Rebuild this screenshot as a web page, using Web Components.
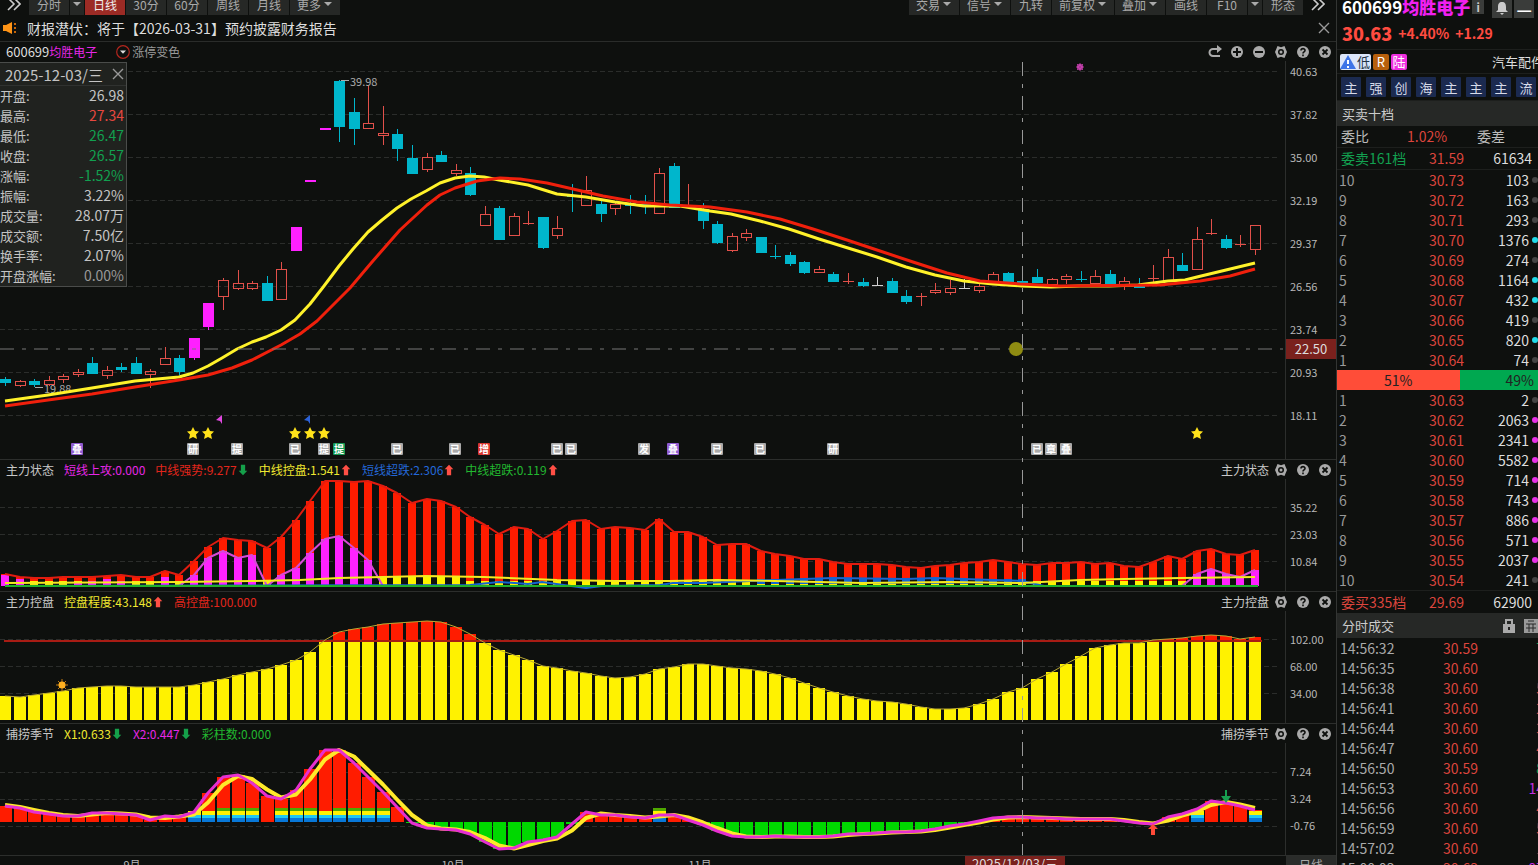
<!DOCTYPE html>
<html lang="zh-CN">
<head>
<meta charset="utf-8">
<title>600699 均胜电子</title>
<style>
  body {
    margin: 0;
    background: #0e100e;
    color: #c8c8c8;
    font-family: "Noto Sans CJK SC", "Noto Sans", sans-serif;
    overflow: hidden;
  }
</style>
</head>
<body>
<stock-terminal></stock-terminal>

<script>
const BASE = `
  * { box-sizing: border-box; }
  p, h2, dl, dt, dd, ol, table, th, td, button { margin: 0; padding: 0; }
  button {
    font: inherit;
    color: inherit;
    background: none;
    border: 0;
    cursor: pointer;
  }
`;

// ---------- icons ----------

const ICONS = {
  redo: '<path d="M10 4H5a3.500 3.500 0 0 0 0 7h7" fill="none" stroke="#aaa" stroke-width="2"/><path d="M9 0l5 4-5 4z" fill="#aaa"/>',
  plus: '<circle cx="7" cy="7" r="6" fill="#aaa"/><path d="M3 7h8M7 3v8" stroke="#0e100e" stroke-width="2"/>',
  minus: '<circle cx="7" cy="7" r="6" fill="#aaa"/><path d="M3 7h8" stroke="#0e100e" stroke-width="2"/>',
  gear: '<path d="M3.500 1L7 2.300 10.500 1l1 2.500L13 7l-1.500 3.500-1 2.500L7 11.700 3.500 13l-1-2.500L1 7l1.500-3.500z" fill="#aaa"/><circle cx="7" cy="7" r="3" fill="#0e100e"/><circle cx="7" cy="7" r="1.500" fill="#aaa"/>',
  help: '<circle cx="7" cy="7" r="6" fill="#aaa"/><path d="M5 5.600c0-2.600 4-2.600 4-.2C9 7 7 6.800 7 8.600M7 9.600v1.600" fill="none" stroke="#0e100e" stroke-width="1.600"/>',
  close: '<circle cx="7" cy="7" r="6" fill="#aaa"/><path d="M4.500 4.500l5 5m0-5l-5 5" stroke="#0e100e" stroke-width="1.800"/>',
  cross: '<path d="M2 2l10 10M12 2L2 12" stroke="#999" stroke-width="1.400"/>',
  more: '<path d="M1 1l6 6-6 6M7 1l6 6-6 6" fill="none" stroke="#ccc" stroke-width="1.600"/>',
  caret: '<path d="M3 5h8L7 9z" fill="#aaa"/>',
  dropdown: '<circle cx="7" cy="7" r="6.300" fill="none" stroke="#b3261e" stroke-width="1.200"/><path d="M4 5.500h6L7 8.700z" fill="#ddd"/>',
  speaker: '<path d="M0 4h3l6-3v12L3 10H0z" fill="#ff9416"/><path d="M11 2h2v2h-2zM11 6h2v2h-2zM11 10h2v2h-2z" fill="#c8660a"/>',
  up: '<path d="M7 1l5 5H9.500v7h-5V6H2z" fill="#ff4f45"/>',
  down: '<path d="M7 13l5-5H9.500V1h-5v7H2z" fill="#15a04a"/>',
  bell: '<path d="M7 0c3 0 4 2 4 5v3l2 2H1l2-2V5c0-3 1-5 4-5zM5 11h4l-2 2z" fill="#ccc"/>',
  lock: '<path d="M1 5h12v9H1z" fill="#aaa"/><path d="M4 6V1h6v5" fill="none" stroke="#aaa" stroke-width="2"/><path d="M7 8v3" stroke="#222" stroke-width="2"/>',
  sheet: '<path d="M0 0h14v14H0z" fill="#999"/><path d="M2 5h10M2 9h10M4 2h6M5 5v8M9 5v8" stroke="#2a2b2a" stroke-width="1"/>',
};

class UiIcon extends HTMLElement {
  connectedCallback() {
    const root = this.shadowRoot || this.attachShadow({ mode: 'open' });
    root.innerHTML = `
      <style>
        :host { display: inline-block; width: 14px; height: 14px; flex: none; }
        svg { display: block; width: 100%; height: 100%; }
      </style>
      <svg viewBox="0 0 14 14" aria-hidden="true">${ICONS[this.getAttribute('name')] || ''}</svg>
    `;
  }
}
customElements.define('ui-icon', UiIcon);

// ---------- top bars ----------

class ToolBar extends HTMLElement {
  connectedCallback() {
    const btn = ([label, kind]) => {
      if (kind === 'arrow') return `<button class="arrow" aria-label="${label}"><ui-icon name="caret"></ui-icon></button>`;
      if (kind === 'menu') return `<button class="menu">${label}<ui-icon name="caret"></ui-icon></button>`;
      return `<button class="${kind || ''}">${label}</button>`;
    };
    const left = [['分时'], ['分时选项', 'arrow'], ['日线', 'active'], ['30分'], ['60分'], ['周线'], ['月线'], ['更多', 'menu']];
    const right = [['交易', 'menu'], ['信号', 'menu'], ['九转'], ['前复权', 'menu'], ['叠加', 'menu'], ['画线'], ['F10'], ['F10选项', 'arrow'], ['形态']];
    this.attachShadow({ mode: 'open' }).innerHTML = `
      <style>
        ${BASE}
        :host { display: flex; justify-content: space-between; height: 15px; overflow: hidden; font-size: 12px; color: #aaa; }
        .group { display: flex; gap: 1px; align-items: flex-end; }
        .group + .group { padding-right: 4px; }
        button { display: flex; align-items: center; justify-content: center; height: 22px; min-width: 40px; padding: 0 7px; background: #262826; white-space: nowrap; }
        .menu { padding: 0 5px 0 7px; }
        .arrow { min-width: 14px; padding: 0; }
        .active { background: #9c2b25; color: #eee; }
        .end { min-width: 28px; background: none; }
      </style>
      <div class="group"><button class="end" aria-label="展开"><ui-icon name="more"></ui-icon></button>${left.map(btn).join('')}</div>
      <div class="group">${right.map(btn).join('')}<button class="end" aria-label="更多工具"><ui-icon name="more"></ui-icon></button></div>
    `;
  }
}
customElements.define('tool-bar', ToolBar);

class NoticeBar extends HTMLElement {
  connectedCallback() {
    this.attachShadow({ mode: 'open' }).innerHTML = `
      <style>
        ${BASE}
        :host { display: flex; align-items: center; gap: 10px; height: 27px; padding: 0 5px 0 3px; border-bottom: 1px solid #2a2c2a; font-size: 14px; color: #ddd; }
        p { flex: 1; }
        button { display: flex; }
      </style>
      <ui-icon name="speaker"></ui-icon>
      <p><slot></slot></p>
      <button aria-label="关闭"><ui-icon name="cross"></ui-icon></button>
    `;
  }
}
customElements.define('notice-bar', NoticeBar);

// ---------- panels ----------

class ChartPanel extends HTMLElement {
  connectedCallback() {
    const ticks = this.getAttribute('ticks').split(',');
    const icons = this.getAttribute('icons').split(',');
    this.attachShadow({ mode: 'open' }).innerHTML = `
      <style>
        ${BASE}
        :host { display: block; font-size: 12px; }
        :host([divided]) { border-top: 1px solid #2c2e2c; }
        header { display: flex; align-items: center; justify-content: space-between; height: 19px; line-height: 18px; padding: 0 4px 0 6px; }
        .legend { display: flex; gap: 10px; align-items: center; }
        .tools { display: flex; gap: 8px; align-items: center; }
        .tools button { display: flex; }
        .name { margin-right: -3px; }
        .body { display: flex; }
        .plot { flex: 1; min-width: 0; }
        ol { width: 51px; padding-left: 4px; border-left: 1px solid #2c2e2c; list-style: none; font-size: 11px; padding-top: var(--axis-top); }
        li { height: var(--axis-step); line-height: 20px; color: #b8b8b8; }
      </style>
      <header>
        <div class="legend"><slot name="legend"></slot></div>
        <div class="tools"><span class="name">${this.getAttribute('label') || ''}</span>${icons.map(n => `<button aria-label="${n}"><ui-icon name="${n}"></ui-icon></button>`).join('')}</div>
      </header>
      <div class="body">
        <div class="plot"><slot></slot></div>
        <ol>${ticks.map(t => `<li>${t}</li>`).join('')}</ol>
      </div>
    `;
  }
}
customElements.define('chart-panel', ChartPanel);

class LegendItem extends HTMLElement {
  connectedCallback() {
    const trend = this.getAttribute('trend');
    this.attachShadow({ mode: 'open' }).innerHTML = `
      <style>
        :host { display: flex; align-items: center; white-space: nowrap; }
        ui-icon { width: 12px; height: 12px; }
      </style>
      <slot></slot>${trend ? `<ui-icon name="${trend}"></ui-icon>` : ''}
    `;
  }
}
customElements.define('legend-item', LegendItem);

// ---------- plots ----------

const DESIGN_WIDTH = 1285;
const COUNT = 87;

// Base class: redraws on resize; x is scaled to the width, y stays in chart units
class BasePlot extends HTMLElement {
  connectedCallback() {
    this.attachShadow({ mode: 'open' }).innerHTML = `
      <style>
        :host { display: block; height: ${this.bottom - this.top}px; overflow: hidden; }
        svg { display: block; width: 100%; height: 100%; }
        text { font-family: "Noto Sans CJK SC", sans-serif; }
      </style>
      <svg></svg>
    `;
    this.svg = this.shadowRoot.querySelector('svg');
    new ResizeObserver(() => this.render()).observe(this);
    this.render();
  }

  render() {
    const w = this.clientWidth || DESIGN_WIDTH;
    this.k = w / DESIGN_WIDTH;
    this.svg.setAttribute('viewBox', `0 ${this.top} ${w} ${this.bottom - this.top}`);
    this.svg.innerHTML = this.draw();
  }

  x(px) { return Math.round(px * this.k); }
  slot(i) { return this.x(5 + i * 14.535); }

  grid(from, step, n) {
    let out = '';
    for (let i = 0; i < n; i++) {
      out += `<path d="M0 ${from + i * step + 0.5}H${this.x(1280)}" stroke="#2b2d2b" stroke-dasharray="5 3"/>`;
    }
    return out;
  }

  bar(i, width, y1, y2, color) {
    if (y2 <= y1) return '';
    return `<rect x="${this.slot(i) - Math.floor(width / 2)}" y="${y1}" width="${width}" height="${y2 - y1}" fill="${color}"/>`;
  }

  line(points, color, width) {
    const pts = points.map(([px, y]) => `${this.x(px)},${y}`).join(' ');
    return `<polyline points="${pts}" fill="none" stroke="${color}" stroke-width="${width}" stroke-linejoin="round"/>`;
  }

  series(values, color, width) {
    return this.line(values.map((y, i) => [5 + i * 14.535, y]), color, width);
  }
}

// kind, high, body top, body bottom, low
const CANDLES = `c377,379,382,386 r380,381,385,387 c379,381,384,387 r376,380,384,386 r374,376,379,383 r369,372,374,377
c357,363,373,373 r366,370,375,379 c363,367,369,372 c357,363,373,373 r369,371,374,388 r347,358,364,364 c355,358,371,375
m338,338,357,360 m303,303,326,330 r278,280,296,310 r270,283,288,290 r281,283,288,290 c276,283,300,300 r262,269,299,299
m227,227,250,250 m180,180,181,181 m128,128,129,129 c80,81,126,142 c98,112,128,145 r86,123,128,129 r106,133,135,145
c129,134,148,161 c145,158,173,173 r153,157,169,172 c151,155,161,162 r164,170,173,176 c167,173,194,196 r206,214,225,226
c206,208,239,239 r213,216,235,235 r211,223,223,225 c217,217,247,249 r216,228,235,239 c184,196,196,212 r176,190,205,205
c201,204,213,222 r201,204,208,215 c195,203,205,214 c195,204,205,214 r168,173,213,213 c163,166,207,207 r184,206,206,207
c203,209,220,229 c221,224,242,244 r233,236,250,252 r229,233,237,241 c237,237,252,253 c245,256,256,259 c252,255,263,266
c261,262,272,274 r266,269,272,273 c272,274,281,281 r273,281,281,284 c278,282,285,287 w277,285,285,286 c278,281,292,292
c290,296,301,304 r293,296,296,306 r283,290,292,294 r280,288,292,295 w279,288,288,288 r284,286,290,293 r272,274,282,282
c272,273,281,281 c279,281,282,282 c269,277,282,283 r278,279,284,284 r274,276,279,284 c271,279,279,282 r270,276,283,283
c270,274,283,283 r277,281,284,290 c278,286,287,287 r265,278,278,282 r249,257,280,280 c253,265,270,271 r227,239,269,269
r219,233,233,235 c235,239,247,249 r235,244,244,247 r225,225,249,255`.split(/\s+/).map(s => [s[0], ...s.slice(1).split(',').map(Number)]);

const MA_FAST = [[5, 401], [48, 395], [92, 388], [135, 381], [179, 377], [193, 373], [208, 366], [222, 358], [237, 349], [252, 342], [266, 337], [281, 330], [295, 320], [310, 304], [324, 286], [339, 266], [353, 249], [368, 232], [382, 220], [397, 208], [411, 199], [426, 191], [440, 183], [455, 178], [470, 176], [484, 177], [499, 180], [528, 185], [557, 194], [586, 197], [615, 202], [644, 206], [680, 206], [710, 211], [731, 214], [760, 221], [789, 229], [819, 239], [848, 248], [877, 257], [906, 267], [935, 275], [964, 281], [993, 284], [1022, 286], [1051, 287], [1080, 286], [1109, 286], [1138, 285], [1168, 281], [1185, 280], [1197, 277], [1226, 270], [1255, 263]];
const MA_SLOW = [[5, 406], [48, 400], [92, 394], [135, 387], [179, 380], [208, 375], [232, 368], [252, 360], [281, 345], [300, 334], [317, 321], [333, 305], [350, 288], [372, 262], [400, 230], [427, 205], [440, 195], [455, 188], [477, 181], [500, 178], [520, 179], [547, 183], [573, 189], [603, 196], [637, 202], [670, 205], [710, 207], [747, 212], [780, 219], [813, 229], [847, 240], [880, 251], [913, 262], [947, 273], [980, 281], [1020, 284], [1060, 286], [1160, 285], [1200, 281], [1230, 276], [1255, 269]];
const MARKS = [[77, '叠', '#8f5bd0'], [193, '研'], [237, '提'], [295, '已'], [324, '提'], [339, '提', '#159a55'], [397, '已'], [455, '已'], [484, '增', '#d8342e'], [557, '已'], [571, '已'], [644, '发'], [673, '叠', '#8f5bd0'], [717, '已'], [760, '已'], [833, '研'], [1037, '已'], [1051, '章'], [1066, '叠']];

class CandlePlot extends BasePlot {
  get top() { return 61; }
  get bottom() { return 459; }

  candle([kind, hi, t, b, lo], i) {
    const x = this.slot(i);
    const color = { r: '#e2504a', c: '#00b6cc', m: '#ff20ff', w: '#d0d0d0' }[kind];
    let out = '';
    if (hi < t) out += `<path d="M${x + 0.5} ${hi}V${t}" stroke="${color}"/>`;
    if (lo > b) out += `<path d="M${x + 0.5} ${b}V${lo}" stroke="${color}"/>`;
    if (t === b) out += `<path d="M${x - 5} ${t + 0.5}H${x + 6}" stroke="${color}"/>`;
    else if (kind === 'r') out += `<rect x="${x - 4.5}" y="${t + 0.5}" width="10" height="${b - t}" fill="none" stroke="${color}"/>`;
    else out += `<rect x="${x - 5}" y="${t}" width="11" height="${b - t + 1}" fill="${color}"/>`;
    return out;
  }

  star(px) {
    return `<path transform="translate(${this.x(px)} 433)" d="M0-6l2 4 4 .5-3 3 1 4.500-4-2-4 2 1-4.500-3-3 4-.5z" fill="#ffe21a"/>`;
  }

  mark([px, label, color = '#a9a9a9']) {
    const x = this.x(px);
    return `<rect x="${x - 6}" y="443" width="12" height="12" rx="1" fill="${color}"/>
      <text x="${x}" y="453" font-size="10" font-weight="700" fill="#fff" text-anchor="middle">${label}</text>`;
  }

  draw() {
    const a = this.x(345);
    const b = this.x(39);
    const pink = this.x(1080);
    return `
      ${this.grid(71, 43, 9)}
      ${CANDLES.map((c, i) => this.candle(c, i)).join('')}
      <g fill="#aaa" font-size="11">
        <path d="M${a - 4} 80.500h8M${b - 4} 387.500h8" stroke="#aaa"/>
        <text x="${a + 5}" y="86">39.98</text>
        <text x="${b + 5}" y="393">19.88</text>
      </g>
      ${this.line(MA_FAST, '#fff22a', 3)}
      ${this.line(MA_SLOW, '#f0200c', 3)}
      <path d="M0 349H${this.x(1283)}" stroke="#777" stroke-dasharray="14 8 4 8"/>
      <circle cx="${this.x(1016)}" cy="349" r="7" fill="#8f8c12"/>
      <circle cx="${pink}" cy="67" r="3" fill="#d94fc0"/>
      <path d="M${pink - 4} 67h8M${pink} 63v8M${pink - 3} 64l6 6m0-6l-6 6" stroke="#b0359a"/>
      <path d="M${this.x(216)} 420l6-5v9l-2-3z" fill="#e048e0"/>
      <path d="M${this.x(304)} 420l6-5v9l-2-3z" fill="#2c62d8"/>
      ${[193, 208, 295, 310, 324, 1197].map(p => this.star(p)).join('')}
      ${MARKS.map(m => this.mark(m)).join('')}
    `;
  }
}
customElements.define('candle-plot', CandlePlot);

const FORCE = [574, 577, 578, 578, 577, 577, 577, 576, 575, 577, 577, 571, 575, 561, 547, 538, 540, 541, 548, 537, 520, 501, 481, 481, 482, 481, 486, 493, 503, 499, 501, 507, 517, 525, 534, 527, 529, 539, 531, 521, 520, 529, 527, 528, 530, 519, 532, 532, 537, 545, 544, 544, 551, 554, 556, 559, 559, 562, 564, 564, 564, 565, 567, 568, 566, 565, 563, 562, 560, 562, 564, 565, 563, 563, 562, 564, 563, 566, 567, 562, 556, 559, 551, 549, 554, 555, 550];
const ATTACK = { 0: 575, 1: 579, 5: 582, 6: 581, 7: 579, 8: 581, 11: 577, 13: 575, 14: 558, 15: 551, 16: 558, 17: 555, 19: 575, 20: 568, 21: 553, 22: 539, 23: 536, 24: 548, 25: 560, 82: 574, 83: 569, 84: 574, 85: 577, 86: 570 };
const CONTROL_LINE = [[5, 583], [179, 582], [252, 581], [300, 580], [339, 578], [426, 576], [484, 577], [557, 580], [615, 581], [670, 581], [717, 580], [775, 581], [862, 583], [949, 582], [1022, 583], [1080, 580], [1124, 579], [1182, 578], [1255, 577]];
const OVERSOLD_LINE = [[5, 586], [470, 585], [499, 582], [528, 584], [542, 582], [571, 586], [586, 588], [602, 586], [660, 585], [673, 583], [702, 583], [750, 581], [804, 579], [833, 578], [906, 579], [935, 578], [993, 580], [1022, 581], [1044, 586], [1255, 586]];

class ForcePlot extends BasePlot {
  get top() { return 479; }
  get bottom() { return 591; }

  draw() {
    const idx = [...Array(COUNT).keys()];
    const attack = idx.map(i => ATTACK[i] || 586);
    const attackPoints = attack.map((y, i) => [5 + i * 14.535, y]);
    const weak = i => i >= 52 && i <= 70;
    return `
      ${this.grid(507, 27, 3)}
      ${idx.map(i => this.bar(i, 8, FORCE[i], 586, '#ff1c00')).join('')}
      ${idx.map(i => this.bar(i, 8, i < 23 || i > 31 ? 581 : 577, 586, '#fff200')).join('')}
      ${idx.filter(weak).map(i => this.bar(i, 8, 579, 584, '#1464d2')).join('')}
      ${idx.map(i => this.bar(i, 8, attack[i], 586, '#ff22ff')).join('')}
      ${this.series(FORCE, '#e01c10', 2)}
      ${this.line(attackPoints.slice(12, 27), '#d64ad6', 2)}
      ${this.line(attackPoints.slice(81), '#d64ad6', 2)}
      ${this.line(OVERSOLD_LINE, '#1464d2', 2)}
      ${this.line(CONTROL_LINE, '#f4ea20', 2)}
      <path d="M${this.x(5)} 586H${this.x(1258)}" stroke="#1fae2c" stroke-width="2"/>
    `;
  }
}
customElements.define('force-plot', ForcePlot);

const CONTROL = [696, 697, 695, 693, 691, 688, 687, 686, 686, 687, 687, 687, 687, 685, 682, 679, 675, 672, 669, 665, 660, 652, 640, 632, 629, 627, 624, 623, 622, 621, 622, 627, 634, 643, 650, 655, 660, 666, 668, 671, 673, 676, 678, 677, 674, 669, 667, 664, 664, 666, 668, 669, 671, 674, 678, 683, 688, 692, 696, 699, 701, 702, 704, 707, 709, 709, 708, 704, 699, 692, 688, 679, 672, 664, 656, 648, 645, 643, 643, 640, 639, 638, 636, 635, 636, 639, 637];

class ControlPlot extends BasePlot {
  get top() { return 611; }
  get bottom() { return 723; }

  draw() {
    const sun = this.x(62);
    return `
      ${this.grid(639, 27, 3)}
      ${CONTROL.map((y, i) => this.bar(i, 12, y, 642, '#ff1c00') + this.bar(i, 12, Math.max(y, 642), 720, '#fff200')).join('')}
      <path d="M${this.x(4)} 641H${this.x(1262)}" stroke="#a81c14" stroke-width="2"/>
      ${this.series(CONTROL, '#b9a833', 1)}
      <path d="M${sun - 6} 685h12M${sun} 679v12M${sun - 4} 681l8 8m0-8l-8 8" stroke="#c27a10"/>
      <circle cx="${sun}" cy="685" r="3.500" fill="#ffb020"/>
    `;
  }
}
customElements.define('control-plot', ControlPlot);

const SEASON = [806, 808, 812, 814, 816, 816, 813, 813, 814, 815, 820, 816, 817, 812, 793, 777, 775, 783, 796, 799, 790, 769, 750, 750, 763, 777, 792, 807, 823, 828, 829, 830, 834, 842, 849, 848, 842, 840, 837, 824, 812, 815, 815, 817, 818, 815, 815, 820, 825, 831, 836, 837, 837, 836, 837, 837, 837, 836, 834, 834, 833, 832, 832, 831, 829, 826, 824, 821, 818, 817, 817, 818, 818, 819, 819, 819, 819, 821, 823, 824, 817, 814, 809, 801, 803, 806, 810];
const RAINBOW = [13, 14, 15, 16, 17, 19, 20, 21, 22, 23, 24, 25, 26, 45, 82, 86];
const BANDS = [[808, 811, '#4fa800'], [811, 815, '#fff200'], [815, 818, '#20c8f0'], [818, 822, '#0878d8']];

class SeasonPlot extends BasePlot {
  get top() { return 743; }
  get bottom() { return 855; }

  draw() {
    const slow = SEASON.map((y, i) => (i ? (y + SEASON[i - 1]) / 2 : 805));
    const bars = SEASON.map((y, i) => {
      let out = y < 822 ? this.bar(i, 13, y, 822, '#ff1c00') : this.bar(i, 13, 822, y, '#00d800');
      if (RAINBOW.includes(i)) {
        const skip = [13, 14, 22, 82, 86].includes(i) ? 1 : 0;
        out += BANDS.slice(skip).map(([a, b, c]) => this.bar(i, 13, a, b, c)).join('');
      }
      return out;
    });
    return `
      ${this.grid(772, 27, 3)}
      ${bars.join('')}
      ${this.series(slow, '#ffe92a', 4)}
      ${this.series(SEASON, '#e62fd0', 3)}
      <path transform="translate(${this.x(1226)} 790)" d="M-1 0h2v6h4l-5 7-5-7h4z" fill="#17a050"/>
      <path transform="translate(${this.x(1153)} 824)" d="M0 0l5 5H2v6h-4V5h-3z" fill="#ff4a38"/>
    `;
  }
}
customElements.define('season-plot', SeasonPlot);

class TimeAxis extends BasePlot {
  get top() { return 856; }
  get bottom() { return 865; }

  draw() {
    const months = [[132, '9月'], [453, '10月'], [700, '11月']];
    return `
      <rect x="${this.x(1015) - 50}" y="856" width="100" height="20" fill="#7a211d"/>
      <g text-anchor="middle" fill="#b8b8b8" font-size="11">
        ${months.map(([px, t]) => `<text x="${this.x(px)}" y="869">${t}</text>`).join('')}
        <text x="${this.x(1015)}" y="869" font-size="13" fill="#ddd">2025/12/03/三</text>
      </g>
    `;
  }
}
customElements.define('time-axis', TimeAxis);

// ---------- floating day data ----------

class DayCard extends HTMLElement {
  connectedCallback() {
    const rows = [['开盘', '26.98', ''], ['最高', '27.34', 'up'], ['最低', '26.47', 'down'], ['收盘', '26.57', 'down'], ['涨幅', '-1.52%', 'down'], ['振幅', '3.22%', ''], ['成交量', '28.07万', ''], ['成交额', '7.50亿', ''], ['换手率', '2.07%', ''], ['开盘涨幅', '0.00%', 'dim']];
    this.attachShadow({ mode: 'open' }).innerHTML = `
      <style>
        ${BASE}
        :host { display: block; box-sizing: border-box; width: 127px; background: #20221f; border: 1px solid #4a4c4a; border-left: 0; color: #c4c4c4; }
        header { display: flex; align-items: center; justify-content: space-between; height: 23px; padding: 0 1px 0 5px; font-size: 15px; border-bottom: 1px solid #303230; }
        header button { display: flex; }
        div { display: flex; justify-content: space-between; height: 20px; line-height: 19px; padding-right: 2px; }
        dt { font-size: 13px; }
        dd { font-size: 14px; }
        .up { color: #e8483f; }
        .down { color: #12a050; }
        .dim { color: #999; }
      </style>
      <header>2025-12-03/三<button aria-label="关闭"><ui-icon name="cross"></ui-icon></button></header>
      <dl>${rows.map(([k, v, c]) => `<div><dt>${k}:</dt><dd class="${c}">${v}</dd></div>`).join('')}</dl>
    `;
  }
}
customElements.define('day-card', DayCard);

// ---------- side bar ----------

class QuoteInfo extends HTMLElement {
  connectedCallback() {
    this.attachShadow({ mode: 'open' }).innerHTML = `
      <style>
        ${BASE}
        :host { display: block; white-space: nowrap; }
        .row { display: flex; align-items: center; padding-left: 5px; border-bottom: 1px solid #1d1f1d; }
        .title { align-items: flex-start; height: 16px; line-height: 14px; font-size: 17px; font-weight: 700; color: #fff; border: 0; }
        .title b { color: #f020f0; }
        .sq { display: flex; align-items: center; justify-content: center; height: 18px; width: 20px; margin-left: 2px; background: #3a3c3a; }
        .info { width: 12px; height: 14px; font-size: 11px; color: #ccc; }
        .bell { margin-left: 8px; }
        .price { height: 34px; gap: 6px; font-size: 14px; font-weight: 700; color: #ff4b40; }
        .price strong { font-size: 18px; }
        .tags { height: 24px; gap: 2px; padding-left: 3px; font-size: 13px; }
        .tag { height: 16px; line-height: 16px; width: 16px; text-align: center; color: #fff; border-radius: 2px; }
        .low { display: flex; width: 31px; background: #dce6fa; color: #234; }
        .low svg { width: 17px; height: 16px; }
        .tags a { margin-left: auto; margin-right: -6px; color: #ddd; text-decoration: none; }
        .chips { height: 27px; gap: 5px; padding-left: 4px; font-size: 13px; }
        .chips button { flex: none; width: 20px; height: 20px; line-height: 19px; background: #1b2a50; color: #d8dcea; border-radius: 1px; }
      </style>
      <div class="row title">600699<b>均胜电子</b><button class="sq info">i</button><button class="sq bell" aria-label="提醒"><ui-icon name="bell"></ui-icon></button><button class="sq">—</button></div>
      <div class="row price"><strong>30.63</strong><span>+4.40%</span><span>+1.29</span></div>
      <div class="row tags">
        <span class="tag low"><svg viewBox="0 0 17 16"><path d="M0 15L8 1l8 14z" fill="#3d74e8"/><path d="M8 6v4M8 12v2" stroke="#fff" stroke-width="2"/></svg>低</span>
        <span class="tag" style="background:#b8600c">R</span>
        <span class="tag" style="background:#ee2fe0">陆</span>
        <a href="#">汽车配件</a>
      </div>
      <div class="row chips">${[...'主强创海主主主流'].map(c => `<button>${c}</button>`).join('')}</div>
    `;
  }
}
customElements.define('quote-info', QuoteInfo);

class SideHeading extends HTMLElement {
  connectedCallback() {
    this.attachShadow({ mode: 'open' }).innerHTML = `
      <style>
        ${BASE}
        :host { display: flex; align-items: center; justify-content: space-between; height: 25px; padding-left: 5px; background: #262826; font-size: 13px; color: #ccc; }
        h2 { font: inherit; }
      </style>
      <h2><slot></slot></h2><slot name="tools"></slot>
    `;
  }
}
customElements.define('side-heading', SideHeading);

class OrderBook extends HTMLElement {
  connectedCallback() {
    const sell = [['30.73', 103, 0], ['30.72', 163, 0], ['30.71', 293, 0], ['30.70', 1376, 1], ['30.69', 274, 0], ['30.68', 1164, 1], ['30.67', 432, 1], ['30.66', 419, 0], ['30.65', 820, 1], ['30.64', 74, 0]];
    const buy = [['30.63', 2, 0], ['30.62', 2063, 1], ['30.61', 2341, 1], ['30.60', 5582, 1], ['30.59', 714, 1], ['30.58', 743, 1], ['30.57', 886, 1], ['30.56', 571, 1], ['30.55', 2037, 1], ['30.54', 241, 0]];
    const row = (n, [price, vol, hot]) => `<tr><th scope="row">${n}</th><td class="up">${price}</td><td>${vol}</td><td><i class="${hot ? 'hot' : ''}"></i></td></tr>`;
    const total = (cls, label, price, vol) => `<p class="total ${cls}"><span>${label}</span><span class="up">${price}</span><span>${vol}</span></p>`;
    this.attachShadow({ mode: 'open' }).innerHTML = `
      <style>
        ${BASE}
        :host { display: block; font-size: 14px; color: #ddd; }
        .total { display: grid; grid-template-columns: 70px 57px 68px; height: 22px; line-height: 20px; border-bottom: 1px solid #1d1f1d; text-align: right; white-space: nowrap; }
        .total :first-child { padding-left: 4px; text-align: left; }
        .ratio { grid-template-columns: 70px 40px 58px; color: #bbb; }
        .ask :first-child { color: #12a050; }
        .bid { height: 23px; line-height: 22px; border-top: 1px solid #1d1f1d; border-bottom: 0; }
        .bid :first-child { color: #dc453d; }
        table { width: 100%; table-layout: fixed; border-collapse: collapse; }
        tr { height: 20px; line-height: 20px; text-align: right; }
        th { width: 52px; padding-left: 2px; text-align: left; font-weight: 400; color: #999; }
        td:nth-child(2) { width: 75px; }
        td:nth-child(3) { width: 65px; }
        td:last-child { text-align: left; }
        i { display: block; width: 6px; height: 6px; margin-left: 3px; border-radius: 50%; background: #444; }
        .sell .hot { background: #20d8e8; }
        .buy .hot { background: #e62ee6; }
        .up { color: #dc453d; }
        .balance { display: grid; grid-template-columns: 61fr 39fr; height: 20px; line-height: 20px; color: #222; }
        .balance span { text-align: center; background: #ff4d38; }
        .balance span + span { padding-right: 4px; text-align: right; background: #00a850; }
      </style>
      <p class="total ratio"><span>委比</span><span class="up">1.02%</span><span>委差</span></p>
      ${total('ask', '委卖161档', '31.59', '61634')}
      <table class="sell">${sell.map((r, i) => row(10 - i, r)).join('')}</table>
      <div class="balance"><span>51%</span><span>49%</span></div>
      <table class="buy">${buy.map((r, i) => row(i + 1, r)).join('')}</table>
      ${total('bid', '委买335档', '29.69', '62900')}
    `;
  }
}
customElements.define('order-book', OrderBook);

class TradeList extends HTMLElement {
  connectedCallback() {
    const rows = [['14:56:32', '30.59', '7', 'down'], ['14:56:35', '30.60', '', 'up'], ['14:56:38', '30.60', '5', 'up'], ['14:56:41', '30.60', '2', 'up'], ['14:56:44', '30.60', '3', 'up'], ['14:56:47', '30.60', '4', 'up'], ['14:56:50', '30.59', '8', 'down'], ['14:56:53', '30.60', '14', 'big'], ['14:56:56', '30.60', '4', 'up'], ['14:56:59', '30.60', '5', 'up'], ['14:57:02', '30.60', '1', 'up'], ['15:00:03', '30.63', '97', 'big']];
    this.attachShadow({ mode: 'open' }).innerHTML = `
      <style>
        ${BASE}
        :host { display: block; font-size: 14px; color: #aaa; }
        table { width: 207px; table-layout: fixed; border-collapse: collapse; }
        tr { height: 20px; line-height: 20px; text-align: right; }
        th { width: 70px; padding-left: 3px; text-align: left; font-weight: 400; }
        td:nth-child(2) { width: 71px; }
        .up { color: #dc453d; }
        .down { color: #12a050; }
        .big { color: #c42ee0; }
      </style>
      <table>${rows.map(([t, p, v, c]) => `<tr><th scope="row">${t}</th><td class="up">${p}</td><td class="${c}">${v}</td></tr>`).join('')}</table>
    `;
  }
}
customElements.define('trade-list', TradeList);

// ---------- page ----------

class StockTerminal extends HTMLElement {
  connectedCallback() {
    this.attachShadow({ mode: 'open' }).innerHTML = `
      <style>
        ${BASE}
        :host { display: grid; grid-template-columns: minmax(0, 1fr) 202px; height: 100vh; overflow: hidden; }
        aside { border-left: 1px solid #333533; overflow: hidden; }
        .charts { position: relative; }
        day-card { position: absolute; left: 0; top: 20px; }
        .cursor { position: absolute; top: 20px; bottom: 0; left: calc((100% - 51px) * 0.795); width: 1px; background: repeating-linear-gradient(#999 0 14px, transparent 14px 22px, #999 22px 26px, transparent 26px 34px); pointer-events: none; }
        .price-flag { position: absolute; right: 0; top: 297px; width: 50px; height: 20px; line-height: 19px; text-align: center; font-size: 13px; color: #ddd; background: #7a211d; }
        .footer { display: flex; border-top: 1px solid #2c2e2c; height: 10px; overflow: hidden; }
        time-axis { flex: 1; }
        .footer button { width: 50px; height: 18px; line-height: 18px; margin-left: 1px; background: #2a2c2a; font-size: 12px; color: #aaa; }
        .main { --axis-top: 0px; --axis-step: 43px; }
        .sub { --axis-top: 18px; --axis-step: 27px; }
        .code { font-size: 13px; color: #ddd; margin-right: -10px; }
        .note { color: #999; }
        .m { color: #e627e6; }
        .r { color: #e2261c; }
        .y { color: #f0e830; }
        .b { color: #2468d8; }
        .g { color: #22b830; }
        .gap { margin-left: 9px; margin-right: -8px; }
        .tools { display: flex; gap: 8px; }
      </style>
      <main>
        <tool-bar></tool-bar>
        <notice-bar>财报潜伏：将于【2026-03-31】预约披露财务报告</notice-bar>
        <div class="charts">
          <chart-panel class="main" icons="redo,plus,minus,gear,help,close" ticks="40.63,37.82,35.00,32.19,29.37,26.56,23.74,20.93,18.11">
            <legend-item slot="legend" class="code">600699</legend-item>
            <legend-item slot="legend" class="m">均胜电子</legend-item>
            <ui-icon slot="legend" name="dropdown" class="gap"></ui-icon>
            <legend-item slot="legend" class="note">涨停变色</legend-item>
            <candle-plot></candle-plot>
          </chart-panel>
          <chart-panel divided class="sub" label="主力状态" icons="gear,help,close" ticks="35.22,23.03,10.84">
            <legend-item slot="legend">主力状态</legend-item>
            <legend-item slot="legend" class="m">短线上攻:0.000</legend-item>
            <legend-item slot="legend" class="r" trend="down">中线强势:9.277</legend-item>
            <legend-item slot="legend" class="y" trend="up">中线控盘:1.541</legend-item>
            <legend-item slot="legend" class="b" trend="up">短线超跌:2.306</legend-item>
            <legend-item slot="legend" class="g" trend="up">中线超跌:0.119</legend-item>
            <force-plot></force-plot>
          </chart-panel>
          <chart-panel divided class="sub" label="主力控盘" icons="gear,help,close" ticks="102.00,68.00,34.00">
            <legend-item slot="legend">主力控盘</legend-item>
            <legend-item slot="legend" class="y" trend="up">控盘程度:43.148</legend-item>
            <legend-item slot="legend" class="r">高控盘:100.000</legend-item>
            <control-plot></control-plot>
          </chart-panel>
          <chart-panel divided class="sub" label="捕捞季节" icons="gear,help,close" ticks="7.24,3.24,-0.76">
            <legend-item slot="legend">捕捞季节</legend-item>
            <legend-item slot="legend" class="y" trend="down">X1:0.633</legend-item>
            <legend-item slot="legend" class="m" trend="down">X2:0.447</legend-item>
            <legend-item slot="legend" class="g">彩柱数:0.000</legend-item>
            <season-plot></season-plot>
          </chart-panel>
          <div class="cursor"></div>
          <div class="price-flag">22.50</div>
          <day-card></day-card>
        </div>
        <div class="footer"><time-axis></time-axis><button>日线</button></div>
      </main>
      <aside>
        <quote-info></quote-info>
        <side-heading>买卖十档</side-heading>
        <order-book></order-book>
        <side-heading>分时成交<span slot="tools" class="tools"><ui-icon name="lock"></ui-icon><ui-icon name="sheet"></ui-icon></span></side-heading>
        <trade-list></trade-list>
      </aside>
    `;
  }
}
customElements.define('stock-terminal', StockTerminal);
</script>
</body>
</html>
